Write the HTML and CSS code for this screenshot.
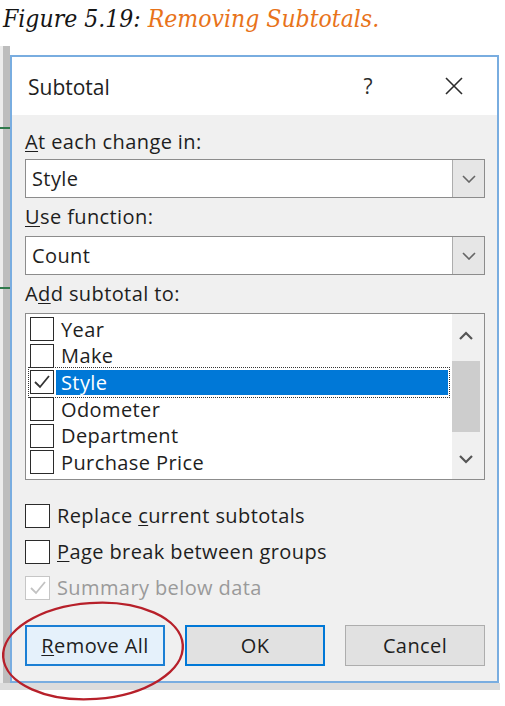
FILE: index.html
```html
<!DOCTYPE html>
<html lang="en">
<head>
<meta charset="utf-8">
<title>Removing Subtotals</title>
<link rel="stylesheet" href="styles.css">
</head>
<body>
<div class="page">
  <p class="caption"><span class="fig">Figure 5.19:</span> <span class="fig-title">Removing Subtotals.</span></p>
  <div class="scene">
    <div class="dialog">
      <div class="titlebar">
        <span class="title">Subtotal</span>
        <span class="help">?</span>
        <span class="close"><svg width="20" height="20" viewBox="0 0 20 20"><path d="M2 2 L18 18 M18 2 L2 18" stroke="#2b2b2b" stroke-width="1.6" fill="none"/></svg></span>
      </div>
      <div class="body">
        <div class="label l1"><u>A</u>t each change in:</div>
        <div class="combo c1">
          <span class="combo-value">Style</span>
          <span class="combo-btn"><svg width="14" height="8" viewBox="0 0 14 8"><path d="M1 1 L7 7 L13 1" stroke="#666" stroke-width="1.6" fill="none"/></svg></span>
        </div>
        <div class="label l2"><u>U</u>se function:</div>
        <div class="combo c2">
          <span class="combo-value">Count</span>
          <span class="combo-btn"><svg width="14" height="8" viewBox="0 0 14 8"><path d="M1 1 L7 7 L13 1" stroke="#666" stroke-width="1.6" fill="none"/></svg></span>
        </div>
        <div class="label l3">A<u>d</u>d subtotal to:</div>
        <div class="listbox">
          <div class="items">
            <div class="item"><span class="cb"></span><span class="item-label">Year</span></div>
            <div class="item"><span class="cb"></span><span class="item-label">Make</span></div>
            <div class="item selected"><span class="cb"><svg width="22" height="22" viewBox="0 0 22 22"><path d="M4 11 L9 16 L18 5" stroke="#333" stroke-width="1.8" fill="none"/></svg></span><span class="item-label">Style</span></div>
            <div class="item"><span class="cb"></span><span class="item-label">Odometer</span></div>
            <div class="item"><span class="cb"></span><span class="item-label">Department</span></div>
            <div class="item"><span class="cb"></span><span class="item-label">Purchase Price</span></div>
          </div>
          <div class="scrollbar">
            <span class="arrow up"><svg width="16" height="10" viewBox="0 0 16 10"><path d="M2 8 L8 2 L14 8" stroke="#555" stroke-width="2.2" fill="none"/></svg></span>
            <span class="track"><span class="thumb"></span></span>
            <span class="arrow down"><svg width="16" height="10" viewBox="0 0 16 10"><path d="M2 2 L8 8 L14 2" stroke="#555" stroke-width="2.2" fill="none"/></svg></span>
          </div>
        </div>
        <div class="options">
          <div class="opt"><span class="cb"></span><span>Replace <u>c</u>urrent subtotals</span></div>
          <div class="opt"><span class="cb"></span><span><u>P</u>age break between groups</span></div>
          <div class="opt disabled"><span class="cb"><svg width="22" height="22" viewBox="0 0 22 22"><path d="M4 11 L9 16 L18 5" stroke="#c2c2c2" stroke-width="1.8" fill="none"/></svg></span><span>Summary below data</span></div>
        </div>
        <div class="buttons">
          <span class="btn hover"><u>R</u>emove All</span>
          <span class="btn default">OK</span>
          <span class="btn">Cancel</span>
        </div>
      </div>
    </div>
  </div>
  <svg class="ring" width="505" height="706" viewBox="0 0 505 706"><ellipse cx="93" cy="651" rx="90" ry="48" transform="rotate(-4 93 651)" fill="none" stroke="#b7202a" stroke-width="2.4"/></svg>
</div>
</body>
</html>
```

FILE: styles.css
```css
* { box-sizing: border-box; }
html, body { margin: 0; padding: 0; background: #fff; }
.page {
  position: relative;
  width: 505px;
  height: 706px;
  overflow: hidden;
  font-family: "Open Sans", "Noto Sans", sans-serif;
}
.caption {
  margin: 0;
  height: 46px;
  padding: 4px 0 0 3px;
  font-family: "DejaVu Serif", serif;
  font-stretch: condensed;
  font-style: italic;
  font-size: 24.5px;
  line-height: 30px;
  white-space: nowrap;
}
.fig { color: #151515; }
.fig-title { color: #e8731a; }

.scene {
  width: 505px;
  padding: 9px 6px 7px 10px;
  background:
    linear-gradient(#2f7a4c, #2f7a4c) 0 81px / 10px 2px no-repeat,
    linear-gradient(#2f7a4c, #2f7a4c) 0 241px / 10px 2px no-repeat,
    linear-gradient(to bottom, transparent 0, transparent calc(100% - 7px), #dcdcdc calc(100% - 7px)) 0 0 / 500px 100% no-repeat,
    linear-gradient(90deg, #ececec 0 3px, #bdbdbd 3px 10px, #fff 10px);
}
.dialog {
  width: 489px;
  border: 2px solid #79ade0;
  background: #f0f0f0;
  color: #1e1e1e;
  font-weight: 500;
}
.titlebar {
  height: 58px;
  background: #fff;
  display: flex;
  align-items: center;
  padding-left: 16px;
}
.title { font-size: 21px; line-height: 26px; flex: 1; padding-top: 1px; }
.help { font-size: 21px; line-height: 26px; width: 20px; text-align: center; margin-right: 66px; color: #2b2b2b; }
.close { width: 20px; height: 20px; display: flex; margin-right: 33px; }

.body {
  height: 566px;
  padding: 14px 12px 0 13px;
  font-size: 20px;
  letter-spacing: 0.4px;
}
.label { line-height: 26px; }
.l2 { margin-top: 6px; }
.l3 { margin-top: 6px; }
u { text-decoration-thickness: 1px; text-underline-offset: 2px; }

.combo {
  height: 39px;
  border: 1px solid #8c8c8c;
  background: #fff;
  display: flex;
  align-items: stretch;
  margin-top: 4px;
}
.c2 { margin-top: 6px; }
.combo-value { flex: 1; padding-left: 6px; line-height: 37px; }
.combo-btn {
  width: 32px;
  background: #e6e6e6;
  border-left: 1px solid #adadad;
  display: flex;
  align-items: center;
  justify-content: center;
}

.listbox {
  margin-top: 6px;
  height: 167px;
  border: 1px solid #8c8c8c;
  background: #fff;
  display: flex;
}
.items { flex: 1; padding: 2px 4px 0 4px; }
.item { height: 26.6px; display: flex; align-items: center; }
.cb {
  width: 24px;
  height: 24px;
  border: 1.4px solid #2b2b2b;
  background: #fff;
  display: flex;
  align-items: center;
  justify-content: center;
  flex: none;
}
.item-label {
  flex: 1;
  margin-left: 2px;
  padding-left: 5px;
  height: 25px;
  line-height: 25px;
}
.selected { outline: 1px dotted #333; outline-offset: 1px; }
.selected .item-label { background: #0078d7; color: #fff; }
.scrollbar {
  width: 32px;
  background: #f0f0f0;
  display: flex;
  flex-direction: column;
}
.arrow { display: flex; align-items: center; justify-content: center; padding-right: 4px; }
.up { height: 44px; }
.down { height: 41px; }
.track { flex: 1; padding-top: 3px; }
.thumb { display: block; width: 28px; height: 71px; background: #cdcdcd; }

.options { margin-top: 24px; display: flex; flex-direction: column; gap: 12px; }
.opt { height: 24px; display: flex; align-items: center; gap: 7px; line-height: 24px; }
.opt .cb { width: 25px; }
.disabled { color: #9a9a9a; }
.disabled .cb { border-color: #c6c6c6; }

.buttons { margin-top: 25px; display: flex; justify-content: space-between; }
.btn {
  width: 140px;
  height: 41px;
  display: flex;
  align-items: center;
  justify-content: center;
  background: #e1e1e1;
  border: 1px solid #adadad;
}
.hover { background: #e5f1fb; border: 2px solid #1b7fd4; }
.default { border: 2px solid #0078d7; }

.ring { position: absolute; left: 0; top: 0; pointer-events: none; }
```
